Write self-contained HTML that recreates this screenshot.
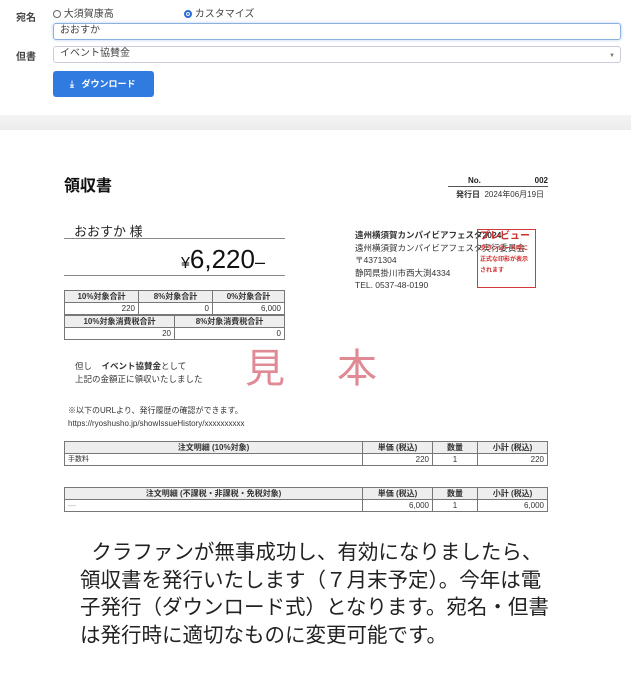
<!DOCTYPE html>
<html><head><meta charset="utf-8"><style>
*{margin:0;padding:0;box-sizing:border-box}
body{width:631px;height:675px;background:#fff;position:relative;overflow:hidden;font-family:"Liberation Sans","Noto Sans CJK JP",sans-serif;color:#333}
.a{position:absolute;white-space:nowrap}
.lbl{font-size:10px;font-weight:bold;color:#444}
.inp{position:absolute;left:53px;width:568px;height:17px;border:1px solid #ccd;border-radius:3px;font-size:10px;line-height:12px;padding:1px 6px;color:#444}
table{border-collapse:collapse;position:absolute;font-size:8px;line-height:10px}
td{border:1px solid #777;height:12px;padding:0 3px;color:#333}
.h td{background:#eee;font-weight:bold;text-align:center}
.r{text-align:right}
.bt{position:absolute;left:80px;width:500px;font-size:20.5px;line-height:27.5px;color:#222;font-family:"Liberation Sans","Noto Sans CJK JP",sans-serif}
</style></head><body>
<div class="a lbl" style="left:16px;top:9px">宛名</div>
<div class="a" style="left:53px;top:9px;font-size:10px;line-height:12px;color:#444"><span style="display:inline-block;width:8px;height:8px;border:1px solid #666;border-radius:50%;vertical-align:-1px"></span> 大須賀康高</div>
<div class="a" style="left:184px;top:9px;font-size:10px;line-height:12px;color:#444"><span style="display:inline-block;width:8px;height:8px;border:2px solid #2a6bd6;border-radius:50%;background:#2a6bd6;box-shadow:inset 0 0 0 1px #fff;vertical-align:-1px"></span> カスタマイズ</div>
<div class="inp" style="top:23px;border-color:#8ab0e0;box-shadow:0 0 3px #b8d0f0">おおすか</div>
<div class="a lbl" style="left:16px;top:48px">但書</div>
<div class="inp" style="top:46px">イベント協賛金<span style="position:absolute;right:5px;top:3px;font-size:6px;color:#777">▼</span></div>
<div class="a" style="left:53px;top:71px;width:101px;height:26px;background:#2f7be0;border-radius:3px;color:#fff;font-size:9px;line-height:12px;font-weight:bold;padding:7px 0 0 17px">⤓ &nbsp;&nbsp;ダウンロード</div>
<div class="a" style="left:0;top:115px;width:631px;height:15px;background:linear-gradient(#f4f4f4,#ececec)"></div>

<div class="a" style="left:64px;top:172px;font-size:16px;font-weight:bold;color:#111">領収書</div>
<div class="a" style="left:448px;top:176px;width:100px;font-size:8px;font-weight:bold;color:#222"><span style="margin-left:20px">No.</span><span style="float:right">002</span></div>
<div class="a" style="left:448px;top:186px;width:100px;border-top:1px solid #555"></div>
<div class="a" style="left:456px;top:189px;font-size:8px;color:#333"><b>発行日</b>&nbsp; 2024年06月19日</div>

<div class="a" style="left:74px;top:221px;font-size:13px;color:#222">おおすか 様</div>
<div class="a" style="left:64px;top:238px;width:221px;border-top:1px solid #888"></div>
<div class="a" style="left:181px;top:244px;font-size:26px;line-height:30px;color:#111"><span style="font-size:16px">¥</span>6,220<span style="font-size:18px">–</span></div>
<div class="a" style="left:64px;top:275px;width:221px;border-top:1px solid #888"></div>

<table style="left:64px;top:290px;width:221px">
<tr class="h"><td style="width:74px">10%対象合計</td><td style="width:74px">8%対象合計</td><td>0%対象合計</td></tr>
<tr><td class="r">220</td><td class="r">0</td><td class="r">6,000</td></tr>
</table>
<table style="left:64px;top:315px;width:221px">
<tr class="h"><td style="width:110px">10%対象消費税合計</td><td>8%対象消費税合計</td></tr>
<tr><td class="r">20</td><td class="r">0</td></tr>
</table>

<div class="a" style="left:75px;top:360px;font-size:8.5px;color:#333">但し&nbsp;&nbsp;&nbsp; <b>イベント協賛金</b>として</div>
<div class="a" style="left:75px;top:373px;font-size:8.5px;color:#333">上記の金額正に領収いたしました</div>
<div class="a" style="left:245px;top:336px;font-size:40px;color:#e08a95;letter-spacing:52px">見本</div>

<div class="a" style="left:355px;top:229px;font-size:8.5px;line-height:12.5px;color:#333"><b>遠州横須賀カンパイビアフェスタ2024</b><br>遠州横須賀カンパイビアフェスタ実行委員会<br>〒4371304<br>静岡県掛川市西大渕4334<br>TEL. 0537-48-0190</div>
<div class="a" style="left:477px;top:229px;width:59px;height:59px;border:1.5px solid #d03a3a;color:#d03030;font-size:6px;font-weight:bold;line-height:11px;padding:1px 2px;overflow:hidden"><span style="font-size:10px">プレビュー</span><br>ダウンロード時に<br>正式な印影が表示<br>されます</div>

<div class="a" style="left:68px;top:404px;font-size:8px;line-height:13px;color:#333">※以下のURLより、発行履歴の確認ができます。<br>https://ryoshusho.jp/showIssueHistory/xxxxxxxxxx</div>

<table style="left:64px;top:441px;width:484px">
<tr class="h"><td>注文明細 (10%対象)</td><td style="width:70px" class="r">単価 (税込)</td><td style="width:45px">数量</td><td style="width:70px" class="r">小計 (税込)</td></tr>
<tr><td style="font-size:7px">手数料</td><td class="r">220</td><td style="text-align:center">1</td><td class="r">220</td></tr>
</table>
<table style="left:64px;top:487px;width:484px">
<tr class="h"><td>注文明細 (不課税・非課税・免税対象)</td><td style="width:70px" class="r">単価 (税込)</td><td style="width:45px">数量</td><td style="width:70px" class="r">小計 (税込)</td></tr>
<tr><td style="color:#aaa">—</td><td class="r">6,000</td><td style="text-align:center">1</td><td class="r">6,000</td></tr>
</table>

<div class="bt" style="top:539px">&nbsp;&nbsp;クラファンが無事成功し、有効になりましたら、<br>領収書を発行いたします（７月末予定）。今年は電<br>子発行（ダウンロード式）となります。宛名・但書<br>は発行時に適切なものに変更可能です。</div>
</body></html>
